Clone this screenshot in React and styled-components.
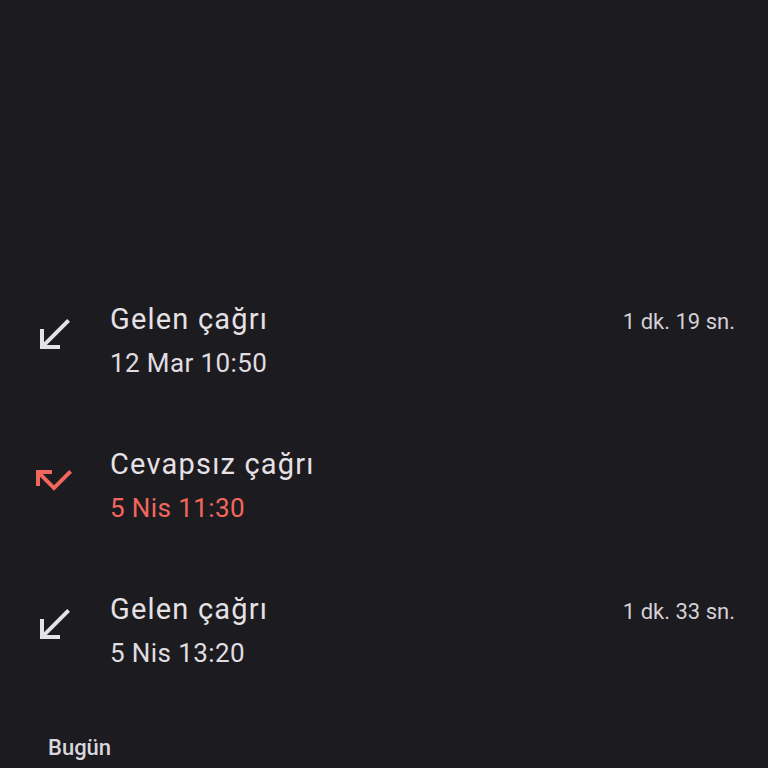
import styled, { createGlobalStyle } from "styled-components";

const GlobalStyle = createGlobalStyle`
  html, body {
    margin: 0;
    padding: 0;
    background: #1c1b1f;
  }
  body {
    font-family: Roboto, "Noto Sans", sans-serif;
    color: #e6e1e5;
  }
`;

const Screen = styled.div`
  width: 768px;
  height: 768px;
  overflow: hidden;
  background: #1c1b1f;
`;

const Spacer = styled.div`
  height: 279px;
`;

const List = styled.div`
  display: flex;
  flex-direction: column;
`;

const Row = styled.div`
  display: flex;
  align-items: flex-start;
  height: 145px;
  box-sizing: border-box;
  padding: 20px 33px 0 30px;
`;

const IconBox = styled.div`
  width: 48px;
  height: 48px;
  margin-top: 12px;
  margin-right: 32px;
  flex-shrink: 0;
  color: ${(p) => (p.$missed ? "#f2675d" : "#e3e2e6")};

  svg {
    display: block;
    width: 48px;
    height: 48px;
  }
`;

const Body = styled.div`
  flex: 1;
  display: flex;
  flex-direction: column;
  gap: 4px;
`;

const TopLine = styled.div`
  display: flex;
  align-items: baseline;
  justify-content: space-between;
`;

const Title = styled.div`
  font-size: 29px;
  line-height: 40px;
  letter-spacing: 1.2px;
  color: #e6e1e5;
`;

const Duration = styled.div`
  font-size: 22px;
  color: #d4d0d6;
`;

const DateText = styled.div`
  font-size: 26px;
  line-height: 40px;
  letter-spacing: 0.4px;
  color: ${(p) => (p.$missed ? "#f2675d" : "#e0dde2")};
`;

const SectionLabel = styled.div`
  margin-top: 19px;
  padding-left: 48px;
  font-size: 22px;
  line-height: 30px;
  font-weight: 500;
  color: #d9d7dd;
`;

const ReceivedIcon = () => (
  <svg viewBox="0 0 24 24" fill="currentColor">
    <path d="M20 5.41L18.59 4 7 15.59V9H5v10h10v-2H8.41z" />
  </svg>
);

const MissedIcon = () => (
  <svg viewBox="0 0 24 24" fill="currentColor">
    <path d="M19.59 7L12 14.59 6.41 9H11V7H3v8h2v-4.59l7 7 9-9z" />
  </svg>
);

const calls = [
  { id: 1, title: "Gelen çağrı", date: "12 Mar 10:50", duration: "1 dk. 19 sn." },
  { id: 2, title: "Cevapsız çağrı", date: "5 Nis 11:30", missed: true },
  { id: 3, title: "Gelen çağrı", date: "5 Nis 13:20", duration: "1 dk. 33 sn." },
];

function CallRow({ call }) {
  return (
    <Row>
      <IconBox $missed={call.missed}>
        {call.missed ? <MissedIcon /> : <ReceivedIcon />}
      </IconBox>
      <Body>
        <TopLine>
          <Title>{call.title}</Title>
          {call.duration && <Duration>{call.duration}</Duration>}
        </TopLine>
        <DateText $missed={call.missed}>{call.date}</DateText>
      </Body>
    </Row>
  );
}

export default function App() {
  return (
    <Screen>
      <GlobalStyle />
      <Spacer />
      <List>
        {calls.map((call) => (
          <CallRow key={call.id} call={call} />
        ))}
      </List>
      <SectionLabel>Bugün</SectionLabel>
    </Screen>
  );
}
